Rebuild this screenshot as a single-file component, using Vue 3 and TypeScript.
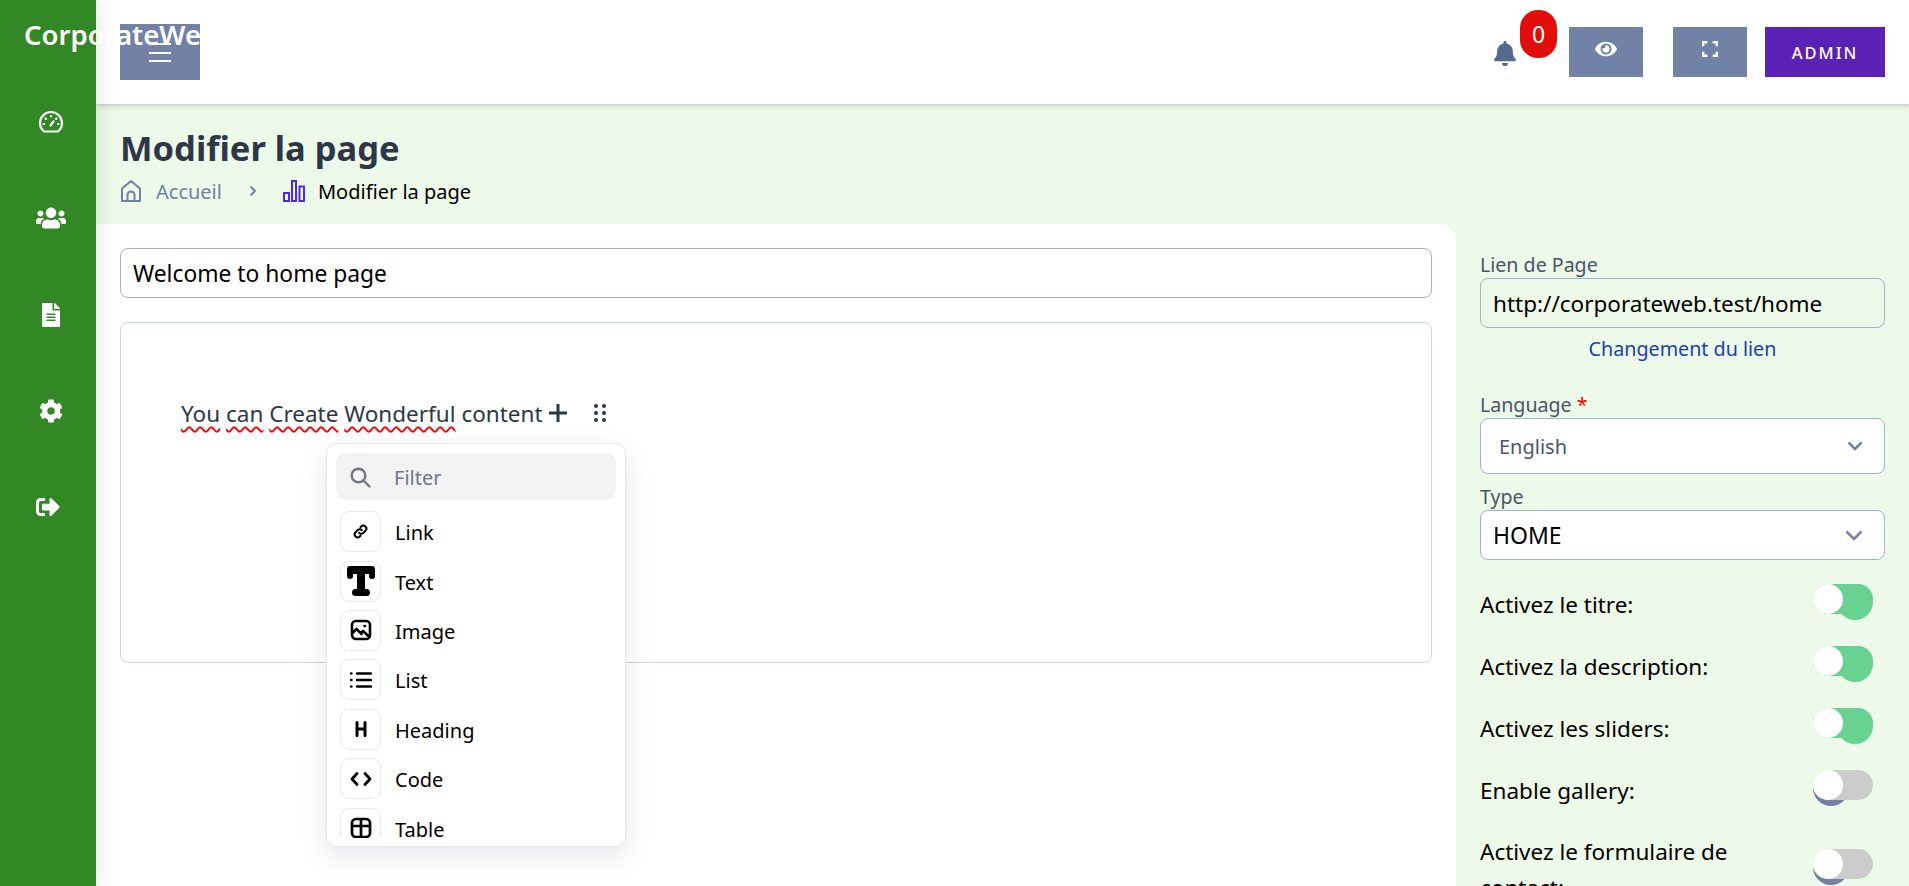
<script setup lang="ts">
interface Block {
  label: string
  d: string
  w: number
  h: number
  box: string
  sw?: number
  filled?: boolean
}

const misspelt: string[] = ['You', 'can', 'Create', 'Wonderful']

const blocks: Block[] = [
  { label: 'Link', w: 17, h: 17, box: '0 0 24 24', d: 'M10 14a4.2 4.2 0 0 0 6 0l3-3a4.2 4.2 0 0 0-6-6l-1 1M14 10a4.2 4.2 0 0 0-6 0l-3 3a4.2 4.2 0 0 0 6 6l1-1' },
  { label: 'Text', w: 28, h: 30, box: '0 0 28 30', filled: true, d: 'M3 0h22a3 3 0 0 1 3 3v7a3 3 0 0 1-6 0V8h-4v15h1.500a3.500 3.500 0 0 1 0 7h-11a3.500 3.500 0 0 1 0-7H10V8H6v2a3 3 0 0 1-6 0V3a3 3 0 0 1 3-3z' },
  { label: 'Image', w: 22, h: 22, box: '0 0 22 22', sw: 2.6, d: 'M6 2h10a4 4 0 0 1 4 4v10a4 4 0 0 1-4 4H6a4 4 0 0 1-4-4V6a4 4 0 0 1 4-4zM2.500 14l4-4 5 5M11 14l2-2 6.500 6M14.500 7h.5' },
  { label: 'List', w: 22, h: 18, box: '0 0 22 18', sw: 2.4, d: 'M7 2.500h14M7 9h14M7 15.500h14M1 2.500h.5M1 9h.5M1 15.500h.5' },
  { label: 'Heading', w: 12, h: 16, box: '0 0 12 16', sw: 3, d: 'M2 1.500v13M10 1.500v13M2 8h8' },
  { label: 'Code', w: 22, h: 14, box: '0 0 22 14', d: 'M7 1.500L2 7l5 5.500M15 1.500L20 7l-5 5.500' },
  { label: 'Table', w: 22, h: 22, box: '0 0 22 22', sw: 2.7, d: 'M6 2h10a4 4 0 0 1 4 4v10a4 4 0 0 1-4 4H6a4 4 0 0 1-4-4V6a4 4 0 0 1 4-4zM2 9h18M11 2v18' },
]

const toggles = [
  { label: 'Activez le titre:', on: true },
  { label: 'Activez la description:', on: true },
  { label: 'Activez les sliders:', on: true },
  { label: 'Enable gallery:', on: false },
  { label: 'Activez le formulaire de contact:', on: false },
]
</script>

<template>
  <div class="shell">
    <div class="brand">CorporateWeb</div>

    <aside class="side">
      <a class="side-link">
        <svg width="26" height="24" viewBox="0 0 26 24" fill="none" stroke="#fff" stroke-width="2.200" stroke-linecap="round">
          <path d="M6 21.500h14c2.500-2 4-5 4-8.500a11 11 0 0 0-22 0c0 3.500 1.500 6.500 4 8.500z" />
          <path d="M13 6v.5M7.500 8.500l.4.4M18.500 8.500l-.4.4M5.500 14h.5M20 14h.5M12.500 15.500l3-4" />
        </svg>
      </a>
      <a class="side-link">
        <svg width="30" height="24" viewBox="0 0 640 512" fill="#fff"><path d="M96 224c35.300 0 64-28.700 64-64s-28.700-64-64-64-64 28.700-64 64 28.700 64 64 64zm448 0c35.300 0 64-28.700 64-64s-28.700-64-64-64-64 28.700-64 64 28.700 64 64 64zm32 32h-64c-17.600 0-33.500 7.100-45.100 18.600 40.300 22.100 68.900 62 75.100 109.400h66c17.700 0 32-14.300 32-32v-32c0-35.300-28.700-64-64-64zm-256 0c61.900 0 112-50.100 112-112S381.900 32 320 32 208 82.100 208 144s50.100 112 112 112zm76.800 32h-8.300c-20.800 10-43.900 16-68.500 16s-47.600-6-68.500-16h-8.300C179.600 288 128 339.600 128 403.200V432c0 26.500 21.500 48 48 48h288c26.500 0 48-21.500 48-48v-28.800c0-63.600-51.600-115.200-115.200-115.200zm-223.700-13.400C161.500 263.100 145.600 256 128 256H64c-35.300 0-64 28.700-64 64v32c0 17.700 14.300 32 32 32h65.900c6.300-47.400 34.900-87.300 75.200-109.400z" /></svg>
      </a>
      <a class="side-link">
        <svg width="18" height="24" viewBox="0 0 384 512" fill="#fff"><path d="M224 136V0H24C10.700 0 0 10.700 0 24v464c0 13.300 10.700 24 24 24h336c13.300 0 24-10.700 24-24V160H248c-13.200 0-24-10.800-24-24zm64 236c0 6.600-5.400 12-12 12H108c-6.600 0-12-5.400-12-12v-8c0-6.600 5.400-12 12-12h168c6.600 0 12 5.400 12 12v8zm0-64c0 6.600-5.400 12-12 12H108c-6.600 0-12-5.400-12-12v-8c0-6.600 5.400-12 12-12h168c6.600 0 12 5.400 12 12v8zm0-72v8c0 6.600-5.400 12-12 12H108c-6.600 0-12-5.400-12-12v-8c0-6.600 5.400-12 12-12h168c6.600 0 12 5.400 12 12zm96-114.100v6.100H256V0h6.100c6.400 0 12.500 2.500 17 7l97.900 98c4.500 4.500 7 10.600 7 16.900z" /></svg>
      </a>
      <a class="side-link">
        <svg width="24" height="24" viewBox="0 0 512 512" fill="#fff"><path d="M487.400 315.700l-42.600-24.600c4.300-23.200 4.300-47 0-70.200l42.600-24.600c4.900-2.800 7.100-8.600 5.500-14-11.100-35.600-30-67.800-54.700-94.600-3.800-4.100-10-5.100-14.800-2.300L380.800 110c-17.900-15.400-38.500-27.300-60.800-35.100V25.800c0-5.600-3.900-10.500-9.400-11.700-36.700-8.200-74.300-7.800-109.200 0-5.500 1.200-9.400 6.100-9.400 11.700V75c-22.200 7.900-42.800 19.800-60.800 35.100L88.700 85.500c-4.900-2.800-11-1.900-14.800 2.300-24.700 26.700-43.600 58.900-54.700 94.600-1.700 5.400.6 11.200 5.500 14L67.300 221c-4.300 23.200-4.300 47 0 70.200l-42.600 24.600c-4.900 2.800-7.100 8.600-5.500 14 11.100 35.600 30 67.800 54.700 94.600 3.800 4.100 10 5.100 14.800 2.300l42.600-24.600c17.900 15.400 38.500 27.300 60.800 35.100v49.200c0 5.600 3.900 10.500 9.400 11.700 36.700 8.200 74.300 7.800 109.200 0 5.500-1.200 9.400-6.100 9.400-11.700v-49.200c22.200-7.900 42.800-19.800 60.800-35.100l42.600 24.600c4.900 2.800 11 1.900 14.800-2.300 24.700-26.700 43.600-58.900 54.700-94.600 1.500-5.500-.7-11.300-5.600-14.100zM256 336c-44.100 0-80-35.900-80-80s35.900-80 80-80 80 35.900 80 80-35.900 80-80 80z" /></svg>
      </a>
      <a class="side-link out">
        <svg width="24" height="24" viewBox="0 0 512 512" fill="#fff"><path d="M497 273L329 441c-15 15-41 4.500-41-17v-96H152c-13.300 0-24-10.700-24-24v-96c0-13.300 10.700-24 24-24h136V88c0-21.400 25.900-32 41-17l168 168c9.300 9.400 9.300 24.600 0 34zM192 436v-40c0-6.600-5.400-12-12-12H96c-17.700 0-32-14.300-32-32V160c0-17.700 14.300-32 32-32h84c6.600 0 12-5.400 12-12V76c0-6.600-5.400-12-12-12H96c-53 0-96 43-96 96v192c0 53 43 96 96 96h84c6.600 0 12-5.400 12-12z" /></svg>
      </a>
    </aside>

    <div class="main">
      <header class="top">
        <button class="btn burger" type="button">
          <span></span><span></span><span></span>
        </button>
        <div class="top-right">
          <div class="bell">
            <svg width="22" height="25" viewBox="0 0 448 512" fill="#56698f"><path d="M224 512c35.320 0 63.970-28.650 63.970-64H160.030c0 35.350 28.650 64 63.970 64zm215.390-149.710c-19.320-20.760-55.470-51.990-55.470-154.290 0-77.700-54.480-139.900-127.940-155.160V32c0-17.670-14.320-32-31.980-32s-31.980 14.330-31.980 32v20.840C118.560 68.100 64.080 130.300 64.080 208c0 102.300-36.150 133.530-55.470 154.290-6 6.450-8.660 14.160-8.610 21.710.11 16.400 12.980 32 32.100 32h383.800c19.120 0 32-15.600 32.100-32 .05-7.550-2.610-15.270-8.610-21.710z" /></svg>
            <span class="badge">0</span>
          </div>
          <button class="btn icon-btn" type="button">
            <svg width="22" height="20" viewBox="0 0 576 512" fill="#fff"><path d="M572.520 241.400C518.290 135.590 410.930 64 288 64S57.680 135.640 3.480 241.410a32.350 32.350 0 0 0 0 29.190C57.710 376.410 165.070 448 288 448s230.320-71.640 284.520-177.410a32.350 32.350 0 0 0 0-29.190zM288 400a144 144 0 1 1 144-144 143.930 143.930 0 0 1-144 144zm0-240a95.310 95.310 0 0 0-25.310 3.790 47.850 47.850 0 0 1-66.900 66.900A95.780 95.780 0 1 0 288 160z" /></svg>
          </button>
          <button class="btn icon-btn full" type="button">
            <svg width="16" height="16" viewBox="0 0 18 18" fill="none" stroke="#fff" stroke-width="2.800"><path d="M1.300 6V1.300H6M12 1.300h4.700V6M16.700 12v4.700H12M6 16.700H1.300V12" /></svg>
          </button>
          <button class="admin" type="button">ADMIN</button>
        </div>
      </header>

      <section class="head">
        <h1>Modifier la page</h1>
        <nav class="crumbs">
          <svg width="22" height="24" viewBox="0 0 22 24" fill="none" stroke="#7182a6" stroke-width="2" stroke-linejoin="round"><path d="M2 22V9.500L11 2l9 7.500V22zM7.500 22v-6a3.500 3.500 0 0 1 7 0v6" /></svg>
          <span class="crumb-home">Accueil</span>
          <svg class="crumb-sep" width="8" height="12" viewBox="0 0 8 12" fill="none" stroke="#7182a6" stroke-width="2"><path d="M1.500 1.500L6 6l-4.500 4.500" /></svg>
          <svg width="22" height="22" viewBox="0 0 22 22" fill="none" stroke="#4a27f5" stroke-width="2"><path d="M1 13h5v8H1zM9 1h4v20H9zM16.500 6.500H21V21h-4.500z" /></svg>
          <span class="crumb-now">Modifier la page</span>
        </nav>
      </section>

      <div class="body">
        <section class="editor-col">
          <input class="title-input" value="Welcome to home page" spellcheck="false" />
          <div class="editor">
            <div class="line">
              <span class="copy"><template v-for="w in misspelt" :key="w"><span class="typo">{{ w }}</span>{{ ' ' }}</template>content</span>
              <svg class="plus" width="18" height="18" viewBox="0 0 18 18" stroke="#2d3748" stroke-width="3"><path d="M9 0v18M0 9h18" /></svg>
              <svg class="drag" width="12" height="18" viewBox="0 0 12 18" fill="#2d3748">
                <circle cx="2" cy="2" r="2" /><circle cx="10" cy="2" r="2" />
                <circle cx="2" cy="9" r="2" /><circle cx="10" cy="9" r="2" />
                <circle cx="2" cy="16" r="2" /><circle cx="10" cy="16" r="2" />
              </svg>
            </div>

            <div class="popover">
              <div class="filter">
                <svg width="21" height="21" viewBox="0 0 21 21" fill="none" stroke="#707684" stroke-width="2.400" stroke-linecap="round"><circle cx="8.500" cy="8.500" r="6.800" /><path d="M13.500 13.500L19.500 19.500" /></svg>
                <span>Filter</span>
              </div>
              <ul class="block-list">
                <li v-for="b in blocks" :key="b.label">
                  <span class="block-icon">
                    <svg :width="b.w" :height="b.h" :viewBox="b.box" :fill="b.filled ? '#000' : 'none'" :stroke="b.filled ? 'none' : '#000'" :stroke-width="b.sw ?? 2.8" stroke-linecap="round" stroke-linejoin="round"><path :d="b.d" /></svg>
                  </span>
                  <span class="block-name">{{ b.label }}</span>
                </li>
              </ul>
            </div>
          </div>
        </section>

        <aside class="settings">
          <label class="field-label">Lien de Page</label>
          <input class="link-input" value="http://corporateweb.test/home" spellcheck="false" />
          <a class="change-link">Changement du lien</a>

          <label class="field-label lang-label">Language <em>*</em></label>
          <div class="select lang">
            <span>English</span>
            <svg width="16" height="10" viewBox="0 0 16 10" fill="none" stroke="#7182a6" stroke-width="2.600"><path d="M1.500 1.500L8 8l6.500-6.500" /></svg>
          </div>

          <label class="field-label type-label">Type</label>
          <div class="select type">
            <span>HOME</span>
            <svg width="18" height="11" viewBox="0 0 18 11" fill="none" stroke="#7182a6" stroke-width="2.600"><path d="M1.500 1.500L9 9l7.500-7.500" /></svg>
          </div>

          <div class="toggles">
            <div v-for="t in toggles" :key="t.label" class="toggle-row">
              <span class="toggle-label">{{ t.label }}</span>
              <span class="toggle" :class="{ on: t.on }"><i class="dot"></i><i class="track"></i><i class="knob"></i></span>
            </div>
          </div>
        </aside>
      </div>
    </div>
  </div>
</template>

<style scoped>
.shell,
.shell * {
  box-sizing: border-box;
}
.shell {
  position: relative;
  display: flex;
  height: 100vh;
  overflow: hidden;
  font-family: "Noto Sans", "Open Sans", Arial, sans-serif;
  font-size: 20px;
  color: #000;
}

.brand {
  position: absolute;
  top: 14px;
  left: 24px;
  width: 176px;
  overflow: hidden;
  white-space: nowrap;
  color: #fff;
  font-size: 27.500px;
  font-weight: 600;
  line-height: 42px;
  z-index: 5;
}

.side {
  flex: 0 0 96px;
  background: #338826;
  padding: 110px 0 0 6px;
  display: flex;
  flex-direction: column;
  gap: 72.300px;
  align-items: center;
  box-shadow: 0 0 22px rgba(0, 0, 0, 0.12);
  z-index: 2;
}
.side-link {
  display: flex;
  height: 24px;
  align-items: center;
  justify-content: center;
}
.side-link.out {
  margin-right: 6px;
}

.main {
  flex: 1;
  min-width: 0;
  display: flex;
  flex-direction: column;
  background: #edf9e9;
}

.top {
  flex: 0 0 104px;
  background: #fff;
  display: flex;
  justify-content: space-between;
  padding: 24px 24px 0;
  box-shadow: 0 1px 5px rgba(60, 80, 60, 0.35);
  z-index: 1;
}
.btn {
  border: 0;
  padding: 0;
  background: #7182a6;
}
.burger {
  width: 80px;
  height: 56px;
  display: flex;
  flex-direction: column;
  align-items: center;
  gap: 6.500px;
  padding-top: 19px;
}
.burger span {
  width: 22px;
  height: 2px;
  background: #fff;
}
.top-right {
  display: flex;
  align-items: flex-start;
  padding-top: 3px;
}
.bell {
  position: relative;
  width: 75px;
  height: 50px;
  padding-top: 14px;
}
.badge {
  position: absolute;
  left: 26px;
  top: -17px;
  width: 37px;
  height: 48px;
  border-radius: 18px;
  background: #e20e0b;
  color: #fff;
  display: flex;
  align-items: center;
  justify-content: center;
  font-size: 23px;
}
.icon-btn {
  width: 74px;
  height: 50px;
  padding-bottom: 6px;
  display: flex;
  align-items: center;
  justify-content: center;
}
.full {
  margin-left: 30px;
  margin-right: 18px;
}
.admin {
  width: 120px;
  height: 50px;
  border: 0;
  background: #5b21b6;
  color: #fff;
  font-family: inherit;
  font-size: 16.500px;
  font-weight: 500;
  letter-spacing: 2px;
}

.head {
  flex: 0 0 120px;
  padding: 22px 24px 0;
}
h1 {
  margin: 0;
  font-size: 34.500px;
  line-height: 44px;
  font-weight: 700;
  color: #2d3748;
}
.crumbs {
  display: flex;
  align-items: center;
  margin-top: 6px;
  height: 30px;
}
.crumb-home {
  color: #7182a6;
  margin-left: 14px;
}
.crumb-sep {
  margin: 0 26px 0 27px;
}
.crumb-now {
  margin-left: 13px;
}

.body {
  flex: 1;
  min-height: 0;
  display: flex;
}
.editor-col {
  flex: 0 0 1360px;
  background: #fff;
  border-top-right-radius: 16px;
  padding: 24px 24px 0;
}
.title-input,
.link-input {
  display: block;
  width: 100%;
  height: 50px;
  padding: 0 12px;
  border: 1px solid #a4b0cc;
  border-radius: 8px;
  font: inherit;
  font-size: 22.500px;
  color: #000;
  outline: none;
}
.title-input {
  background: #fff;
  font-size: 22.800px;
}

.editor {
  position: relative;
  margin-top: 24px;
  height: 341px;
  border: 1px solid #cbd5e0;
  border-radius: 8px;
  padding: 74px 0 0 60px;
}
.line {
  display: flex;
  align-items: center;
  height: 36px;
  color: #2d3748;
  font-size: 22.500px;
}
.copy {
  white-space: pre;
  margin-bottom: 3px;
}
.typo {
  text-decoration: underline wavy #f00 2px;
  text-underline-offset: 4px;
}
.plus {
  margin-left: 6px;
  margin-bottom: 5px;
}
.drag {
  margin-left: 27px;
  margin-bottom: 5px;
}

.popover {
  position: absolute;
  left: 205px;
  top: 120px;
  width: 300px;
  height: 404px;
  background: #fff;
  border: 1px solid #e8e8eb;
  border-radius: 10px;
  padding: 9px 9px 8px;
  box-shadow: 0 10px 28px rgba(26, 26, 60, 0.1);
  z-index: 3;
}
.filter {
  display: flex;
  align-items: center;
  gap: 23px;
  height: 47px;
  padding-left: 14px;
  padding-top: 1px;
  background: #f3f3f3;
  border-radius: 10px;
  color: #707684;
}
.block-list {
  list-style: none;
  margin: 11px 0 0;
  padding: 0 0 0 4px;
  height: 327px;
  overflow: hidden;
}
.block-list li {
  display: flex;
  align-items: center;
  gap: 14px;
  height: 41.400px;
  margin-bottom: 8px;
}
.block-name {
  padding-top: 2px;
}
.block-icon {
  flex: 0 0 41px;
  height: 41px;
  display: flex;
  align-items: center;
  justify-content: center;
  border: 1.500px solid #e8e8eb;
  border-radius: 9px;
  background: #fff;
}

.settings {
  flex: 1;
  padding: 28px 24px 0;
}
.field-label {
  display: block;
  color: #4a5568;
  line-height: 26px;
  font-size: 19.600px;
}
.field-label em {
  color: #f00;
  font-style: normal;
}
.link-input {
  background: #edf9e9;
}
.change-link {
  display: block;
  text-align: center;
  color: #1e40af;
  font-size: 19.700px;
  line-height: 42px;
}
.lang-label {
  margin-top: 22px;
}
.select {
  display: flex;
  align-items: center;
  justify-content: space-between;
  background: #fff;
  border: 1px solid #a4b0cc;
  border-radius: 8px;
}
.lang {
  height: 56px;
  padding: 0 21px 0 18px;
  color: #4a5568;
}
.type-label {
  margin-top: 10px;
}
.type {
  height: 50px;
  padding: 0 21px 0 12px;
  font-size: 23px;
}

.toggles {
  margin-top: 24px;
  display: flex;
  flex-direction: column;
  gap: 20px;
}
.toggle-row {
  display: flex;
  align-items: center;
  justify-content: space-between;
  padding-right: 12px;
}
.toggle-row:last-child {
  margin-top: 2px;
}
.toggle-label {
  width: 280px;
  line-height: 36px;
  font-size: 22.500px;
}
.toggle {
  position: relative;
  width: 60px;
  height: 30px;
  margin-bottom: 12px;
}
.track {
  position: absolute;
  inset: 0;
  border-radius: 15px;
  background: #ccc;
}
.on .track {
  background: #68d391;
}
.dot {
  position: absolute;
  left: 0;
  top: 0;
  width: 36px;
  height: 36px;
  border-radius: 50%;
  background: #7182a6;
}
.on .dot {
  left: 24px;
  background: #68d391;
}
.knob {
  position: absolute;
  left: 0;
  top: 0;
  width: 30px;
  height: 30px;
  border-radius: 50%;
  background: #fff;
}
</style>
